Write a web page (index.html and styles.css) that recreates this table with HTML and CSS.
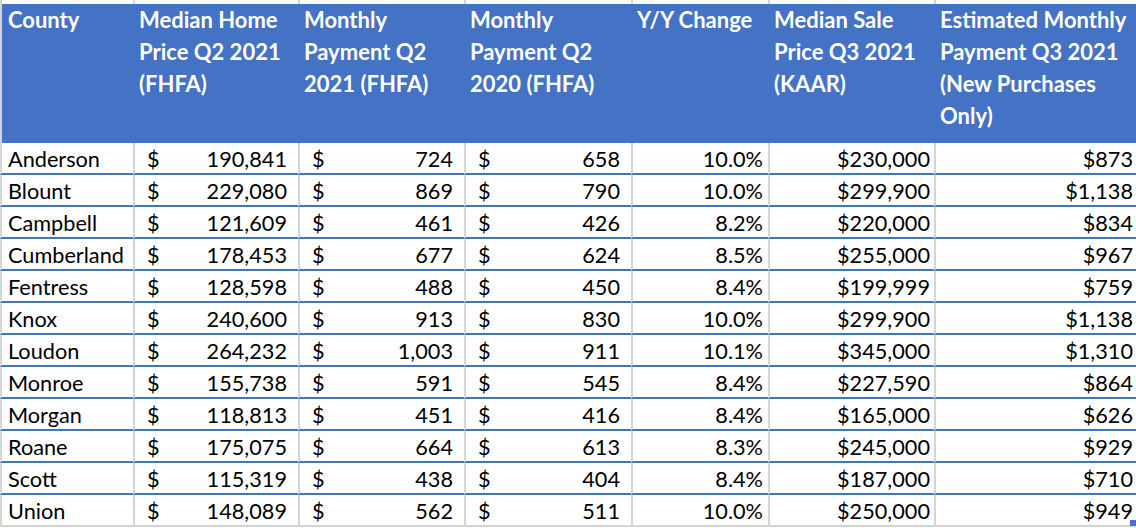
FILE: index.html
```html
<!DOCTYPE html>
<html lang="en">
<head>
<meta charset="utf-8">
<title>County Housing Payments</title>
<link rel="stylesheet" href="styles.css">
</head>
<body>
<div class="sheet">
  <div class="strip"></div><div class="strip"></div><div class="strip"></div><div class="strip"></div><div class="strip"></div><div class="strip"></div><div class="strip"></div>

  <div class="hd first">County</div>
  <div class="hd">Median Home Price Q2 2021 (FHFA)</div>
  <div class="hd">Monthly Payment Q2 2021 (FHFA)</div>
  <div class="hd">Monthly Payment Q2 2020 (FHFA)</div>
  <div class="hd">Y/Y Change</div>
  <div class="hd">Median Sale Price Q3 2021 (KAAR)</div>
  <div class="hd">Estimated Monthly Payment Q3 2021 (New Purchases Only)</div>

  <div class="c name">Anderson</div><div class="c cur c2"><span>$</span><span>190,841</span></div><div class="c cur"><span>$</span><span>724</span></div><div class="c cur"><span>$</span><span>658</span></div><div class="c num pct">10.0%</div><div class="c num sale">$230,000</div><div class="c num est">$873</div>
  <div class="c name">Blount</div><div class="c cur c2"><span>$</span><span>229,080</span></div><div class="c cur"><span>$</span><span>869</span></div><div class="c cur"><span>$</span><span>790</span></div><div class="c num pct">10.0%</div><div class="c num sale">$299,900</div><div class="c num est">$1,138</div>
  <div class="c name">Campbell</div><div class="c cur c2"><span>$</span><span>121,609</span></div><div class="c cur"><span>$</span><span>461</span></div><div class="c cur"><span>$</span><span>426</span></div><div class="c num pct">8.2%</div><div class="c num sale">$220,000</div><div class="c num est">$834</div>
  <div class="c name">Cumberland</div><div class="c cur c2"><span>$</span><span>178,453</span></div><div class="c cur"><span>$</span><span>677</span></div><div class="c cur"><span>$</span><span>624</span></div><div class="c num pct">8.5%</div><div class="c num sale">$255,000</div><div class="c num est">$967</div>
  <div class="c name">Fentress</div><div class="c cur c2"><span>$</span><span>128,598</span></div><div class="c cur"><span>$</span><span>488</span></div><div class="c cur"><span>$</span><span>450</span></div><div class="c num pct">8.4%</div><div class="c num sale">$199,999</div><div class="c num est">$759</div>
  <div class="c name">Knox</div><div class="c cur c2"><span>$</span><span>240,600</span></div><div class="c cur"><span>$</span><span>913</span></div><div class="c cur"><span>$</span><span>830</span></div><div class="c num pct">10.0%</div><div class="c num sale">$299,900</div><div class="c num est">$1,138</div>
  <div class="c name">Loudon</div><div class="c cur c2"><span>$</span><span>264,232</span></div><div class="c cur"><span>$</span><span>1,003</span></div><div class="c cur"><span>$</span><span>911</span></div><div class="c num pct">10.1%</div><div class="c num sale">$345,000</div><div class="c num est">$1,310</div>
  <div class="c name">Monroe</div><div class="c cur c2"><span>$</span><span>155,738</span></div><div class="c cur"><span>$</span><span>591</span></div><div class="c cur"><span>$</span><span>545</span></div><div class="c num pct">8.4%</div><div class="c num sale">$227,590</div><div class="c num est">$864</div>
  <div class="c name">Morgan</div><div class="c cur c2"><span>$</span><span>118,813</span></div><div class="c cur"><span>$</span><span>451</span></div><div class="c cur"><span>$</span><span>416</span></div><div class="c num pct">8.4%</div><div class="c num sale">$165,000</div><div class="c num est">$626</div>
  <div class="c name">Roane</div><div class="c cur c2"><span>$</span><span>175,075</span></div><div class="c cur"><span>$</span><span>664</span></div><div class="c cur"><span>$</span><span>613</span></div><div class="c num pct">8.3%</div><div class="c num sale">$245,000</div><div class="c num est">$929</div>
  <div class="c name">Scott</div><div class="c cur c2"><span>$</span><span>115,319</span></div><div class="c cur"><span>$</span><span>438</span></div><div class="c cur"><span>$</span><span>404</span></div><div class="c num pct">8.4%</div><div class="c num sale">$187,000</div><div class="c num est">$710</div>
  <div class="c name last">Union</div><div class="c cur c2 last"><span>$</span><span>148,089</span></div><div class="c cur last"><span>$</span><span>562</span></div><div class="c cur last"><span>$</span><span>511</span></div><div class="c num pct last">10.0%</div><div class="c num sale last">$250,000</div><div class="c num est last">$949</div>

  <div class="handle"></div>
</div>
</body>
</html>
```
FILE: styles.css
```css
html, body {
  margin: 0;
  padding: 0;
  background: #ffffff;
}

.sheet {
  position: relative;
  width: 1136px;
  height: 528px;
  overflow: hidden;
  display: grid;
  grid-template-columns: 133px 165px 166px 167px 137px 166px 202px;
  grid-template-rows: 4px 139px repeat(12, 32px);
  font-family: Lato, "Liberation Sans", sans-serif;
  font-size: 21.7px;
  color: #000000;
}

.strip {
  box-sizing: border-box;
  border-left: 2px solid #d4d4d4;
}

.hd {
  box-sizing: border-box;
  background: #4472c4;
  color: #ffffff;
  font-weight: 700;
  font-size: 22px;
  line-height: 32px;
  padding: 0 2px 0 6px;
  white-space: normal;
}

.hd.first {
  border-left: 2px solid #d4d4d4;
}

.c {
  box-sizing: border-box;
  border-left: 2px solid #d4d4d4;
  border-bottom: 2px solid #4472c4;
  padding-top: 2px;
  line-height: 28px;
  white-space: nowrap;
}

.c.last {
  border-bottom-color: #d4d4d4;
}

.name {
  padding-left: 6px;
}

.cur {
  display: flex;
  justify-content: space-between;
  padding-left: 12px;
  padding-right: 11px;
}

.num {
  text-align: right;
}

.pct {
  padding-right: 5px;
}

.sale {
  padding-right: 4px;
}

.est {
  padding-right: 3px;
}

.handle {
  position: absolute;
  right: 0;
  bottom: 2px;
  width: 6px;
  height: 6px;
  background: #4472c4;
}
```
